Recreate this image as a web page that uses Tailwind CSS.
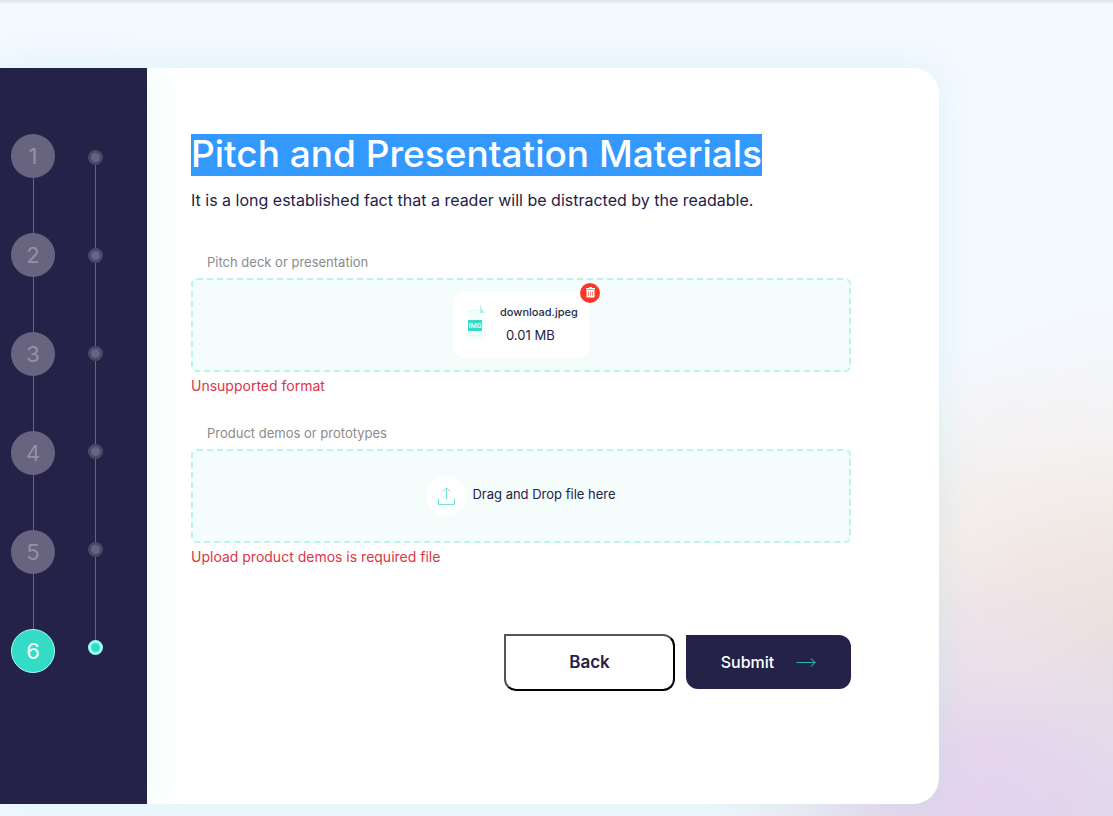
<!DOCTYPE html>
<html lang="en">
<head>
  <meta charset="UTF-8">
  <meta name="viewport" content="width=device-width, initial-scale=1.0">
  <title>Pitch and Presentation Materials</title>
  <script src="https://cdn.jsdelivr.net/npm/@tailwindcss/browser@4"></script>
</head>
<body class="min-h-screen bg-[#f4f8ff] font-['Inter',sans-serif] text-[#252249]">

  <!-- Page background with soft colour blobs -->
  <div class="min-h-screen flex flex-col overflow-hidden bg-[#f4f8ff] bg-[radial-gradient(circle_at_980px_830px,#e3d1ee_0px,#e4d2eecc_90px,#e6daf266_170px,#f4f8ff00_280px),radial-gradient(circle_at_1160px_850px,#dad9ea_0px,#dad9eacc_80px,#e0deec00_230px),radial-gradient(ellipse_340px_360px_at_1150px_660px,#e9ded9_0%,#efe5dfcc_35%,#f4efeb88_65%,#f4f8ff00_100%),radial-gradient(ellipse_280px_330px_at_970px_680px,#ecdae4_0%,#f2e6e7cc_45%,#f4f0f066_75%,#f4f8ff00_100%)]">

    <!-- Bottom edge of the site header -->
    <header class="h-1 bg-linear-to-b from-[#dfe2e8] to-[#f4f8ff]"></header>

    <main class="flex flex-1 pt-16 pb-3 pr-[174px]">

      <!-- Steps -->
      <aside class="z-10 w-[147px] shrink-0 flex items-start gap-[33px] pl-[11px] bg-[#252249] shadow-[0_0_36px_#34dcc621]">
        <ol class="flex flex-col items-center pt-[66px] text-[22px] text-[#9491a6]">
          <li class="size-11 rounded-full bg-[#686480] flex items-center justify-center">1</li>
          <li class="w-px h-[55px] bg-[#686480]" aria-hidden="true"></li>
          <li class="size-11 rounded-full bg-[#686480] flex items-center justify-center">2</li>
          <li class="w-px h-[55px] bg-[#686480]" aria-hidden="true"></li>
          <li class="size-11 rounded-full bg-[#686480] flex items-center justify-center">3</li>
          <li class="w-px h-[55px] bg-[#686480]" aria-hidden="true"></li>
          <li class="size-11 rounded-full bg-[#686480] flex items-center justify-center">4</li>
          <li class="w-px h-[55px] bg-[#686480]" aria-hidden="true"></li>
          <li class="size-11 rounded-full bg-[#686480] flex items-center justify-center">5</li>
          <li class="w-px h-[55px] bg-[#686480]" aria-hidden="true"></li>
          <li class="size-11 rounded-full bg-[#34dcc6] border border-[#9dfff2] text-white flex items-center justify-center">6</li>
        </ol>
        <div class="flex flex-col items-center pt-[82px]" aria-hidden="true">
          <span class="size-[15px] rounded-full border-3 border-[#4a476a] bg-[#686480]"></span>
          <span class="w-px h-[83px] bg-[#686480]"></span>
          <span class="size-[15px] rounded-full border-3 border-[#4a476a] bg-[#686480]"></span>
          <span class="w-px h-[83px] bg-[#686480]"></span>
          <span class="size-[15px] rounded-full border-3 border-[#4a476a] bg-[#686480]"></span>
          <span class="w-px h-[83px] bg-[#686480]"></span>
          <span class="size-[15px] rounded-full border-3 border-[#4a476a] bg-[#686480]"></span>
          <span class="w-px h-[83px] bg-[#686480]"></span>
          <span class="size-[15px] rounded-full border-3 border-[#4a476a] bg-[#686480]"></span>
          <span class="w-px h-[83px] bg-[#686480]"></span>
          <span class="size-[15px] rounded-full border-3 border-[#9dfff2] bg-[#34dcc6]"></span>
        </div>
      </aside>

      <!-- Form card -->
      <form class="flex-1 min-w-0 pt-[66px] pl-11 pr-[88px] bg-white rounded-r-[26px] shadow-[0_0_36px_#34dcc61f]">
        <h1 class="flex text-[37px] font-medium whitespace-nowrap"><span class="bg-[#3399ff] pb-0.5 leading-10 text-white">Pitch and Presentation Materials</span></h1>
        <p class="mt-3 text-base leading-6 whitespace-nowrap">It is a long established fact that a reader will be distracted by the readable.</p>

        <div class="mt-10">
          <label for="deck" class="block pl-4 text-[13px] leading-5 text-[#8b8b8b]">Pitch deck or presentation</label>
          <div class="mt-1.5 h-[94px] flex items-center justify-center rounded-md border-2 border-dashed border-[#b9f3ea] bg-[#f4fdfc]">
            <input id="deck" type="file" class="sr-only">
            <div class="relative h-[66px] w-[136px] flex items-start rounded-xl bg-white pt-2 pl-[15px]">
              <svg class="mt-1 w-[18px] h-9 shrink-0" viewBox="0 0 18 36">
                <path d="M0 6h12v7h6v22H0z" fill="#f3fefc"/>
                <path d="M0 6h12v1H0zM0 31h14v1H0z" fill="#e2faf7"/>
                <path d="M12 0q1 5 5 9h-5z" fill="#aef1e8"/>
                <rect y="16" width="14" height="11" fill="#34dcc6"/>
                <text x="7" y="24" text-anchor="middle" font-family="Roboto, sans-serif" font-size="7" font-weight="500" fill="#fff">IMG</text>
              </svg>
              <div class="ml-3.5">
                <p class="text-[11px] leading-6 font-medium text-[#252f49]">download.jpeg</p>
                <p class="pl-1.5 text-[13px] leading-[22px]">0.01 MB</p>
              </div>
              <button type="button" aria-label="Remove file" class="absolute -top-[9px] -right-[11px] size-5 rounded-full bg-[#ff3527] flex items-center justify-center">
                <svg class="size-3" viewBox="0 0 12 12">
                  <path d="M5 0h3v1h3v1.500H2V1h3zM2.500 3h8v7.500h-8z" fill="#fff"/>
                  <path d="M4.500 4.500v4.500M6.500 4.500v4.500M8.500 4.500v4.500" fill="none" stroke="#ff3527" stroke-width=".6"/>
                </svg>
              </button>
            </div>
          </div>
          <p class="mt-1 text-sm leading-5 text-[#dc3545]">Unsupported format</p>
        </div>

        <div class="mt-[27px]">
          <label for="demos" class="block pl-4 text-[13px] leading-5 text-[#8b8b8b]">Product demos or prototypes</label>
          <label for="demos" class="mt-1.5 h-[94px] flex items-center justify-center rounded-md border-2 border-dashed border-[#b9f3ea] bg-[#f4fdfc] cursor-pointer">
            <input id="demos" type="file" class="sr-only">
            <span class="size-10 rounded-full bg-white flex items-center justify-center">
              <svg class="size-5" viewBox="0 0 20 20" fill="none" stroke="#6fe6d8">
                <path d="M2.500 12.500v6h16v-6M10.500 13v-11M6.500 5.500l4-3.500 4 3.500"/>
              </svg>
            </span>
            <span class="ml-1.5 pb-1 text-[13px] leading-5">Drag and Drop file here</span>
          </label>
          <p class="mt-1 text-sm leading-5 text-[#dc3545]">Upload product demos is required file</p>
        </div>

        <div class="mt-[67px] flex items-start justify-end gap-[11px]">
          <button type="button" class="h-[57px] w-[171px] rounded-xl rounded-tl-none border-2 border-t-[#555] border-l-[#555] border-r-black border-b-black bg-white text-[17px] font-semibold">Back</button>
          <button type="submit" class="mt-px h-[54px] w-[165px] rounded-xl rounded-tl-none bg-[#252249] flex items-center justify-center gap-[22px] text-base font-medium text-white">
            Submit
            <svg class="w-5 h-3" viewBox="0 0 20 12" fill="none" stroke="#34dcc6">
              <path d="M0.500 6.500h18" opacity=".8"/>
              <path d="M15 2.500l4 4-4 4"/>
            </svg>
          </button>
        </div>
      </form>
    </main>
  </div>
</body>
</html>
